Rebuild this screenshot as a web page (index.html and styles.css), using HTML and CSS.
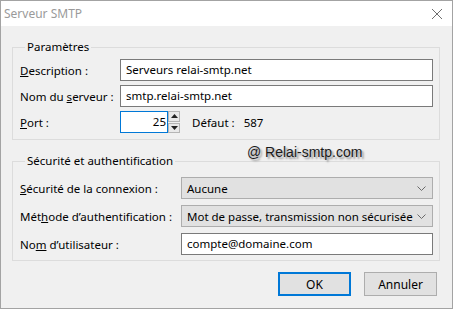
FILE: index.html
```html
<!doctype html>
<html>
<head>
    <meta charset="utf-8">
    <title>Serveur SMTP</title>
    <link rel="stylesheet" href="styles.css">
</head>
<body>

<div class="window">
    <div class="titlebar">
        <span class="title">Serveur SMTP</span>
        <svg class="close" width="12" height="12" viewBox="0 0 12 12">
            <path d="M1 1 L11 11 M11 1 L1 11" stroke="#6e6e6e" stroke-width="1" fill="none"/>
        </svg>
    </div>

    <div class="content">
        <fieldset class="group group-params">
            <legend>Paramètres</legend>
            <div class="form-grid">
                <label><u>D</u>escription :</label>
                <div class="textbox">Serveurs relai-smtp.net</div>

                <label>Nom du <u>s</u>erveur :</label>
                <div class="textbox">smtp.relai-smtp.net</div>

                <label><u>P</u>ort :</label>
                <div class="port-row">
                    <div class="textbox port focused">25</div>
                    <div class="spinner">
                        <span class="spin-btn">
                            <svg width="7" height="4" viewBox="0 0 7 4"><path d="M0 4 L3.5 0 L7 4 Z" fill="#222"/></svg>
                        </span>
                        <span class="spin-btn">
                            <svg width="7" height="4" viewBox="0 0 7 4"><path d="M0 0 L3.5 4 L7 0 Z" fill="#222"/></svg>
                        </span>
                    </div>
                    <span class="default-label">Défaut :</span>
                    <span class="default-value">587</span>
                </div>
            </div>
        </fieldset>

        <fieldset class="group group-security">
            <legend>Sécurité et authentification</legend>
            <div class="form-grid wide">
                <label><u>S</u>écurité de la connexion :</label>
                <div class="combo">
                    <span>Aucune</span>
                    <svg width="9" height="5" viewBox="0 0 9 5"><path d="M0.5 0.5 L4.5 4.5 L8.5 0.5" stroke="#6a6a6a" fill="none"/></svg>
                </div>

                <label>Mét<u>h</u>ode d’authentification :</label>
                <div class="combo">
                    <span>Mot de passe, transmission non sécurisée</span>
                    <svg width="9" height="5" viewBox="0 0 9 5"><path d="M0.5 0.5 L4.5 4.5 L8.5 0.5" stroke="#6a6a6a" fill="none"/></svg>
                </div>

                <label>No<u>m</u> d’utilisateur :</label>
                <div class="textbox">compte@domaine.com</div>
            </div>
        </fieldset>

        <div class="buttons">
            <button class="btn default">OK</button>
            <button class="btn">Annuler</button>
        </div>
    </div>

    <div class="watermark">@ Relai-smtp.com</div>
</div>

</body>
</html>
```

FILE: styles.css
```css
body {
    margin: 0;
    font-family: "Noto Sans", "Open Sans", sans-serif;
    font-size: 11.5px;
    color: #000;
    background: #fff;
}

.window {
    position: relative;
    width: 453px;
    height: 309px;
    box-sizing: border-box;
    border: 1px solid #a3a3a3;
    background: #f0f0f0;
}

.titlebar {
    height: 25px;
    background: #fff;
    display: flex;
    align-items: center;
    justify-content: space-between;
    padding: 0 9px 0 3px;
}
.title {
    color: #9a9a9a;
    font-size: 12px;
}
.close {
    display: block;
}

.content {
    padding: 13px 12px 0 11px;
}

.group {
    margin: 0;
    border: 1px solid #dcdcdc;
    padding: 4px 6px 6px 7px;
}
.group legend {
    padding: 0 2px;
    margin-left: 5px;
    line-height: 16px;
}
.group-security {
    margin-top: 13px;
    padding-top: 8px;
    padding-bottom: 5px;
}

.form-grid {
    display: grid;
    grid-template-columns: 100px 1fr;
    grid-auto-rows: 22px;
    row-gap: 4px;
    align-items: center;
    white-space: nowrap;
}
.form-grid.wide {
    grid-template-columns: 161px 1fr;
    row-gap: 6px;
}

.textbox {
    height: 22px;
    box-sizing: border-box;
    border: 1px solid #7a7a7a;
    background: #fff;
    padding: 0 5px;
    line-height: 20px;
    overflow: hidden;
}
.textbox.focused {
    border-color: #0078d7;
}

.port-row {
    display: flex;
    align-items: center;
    height: 22px;
}
.textbox.port {
    width: 48px;
    text-align: right;
    padding-right: 1px;
}
.spinner {
    width: 12px;
    height: 22px;
    display: flex;
    flex-direction: column;
    gap: 1px;
}
.spin-btn {
    flex: 1;
    display: flex;
    align-items: center;
    justify-content: center;
    background: #e9e9e9;
    border: 1px solid #b5b5b5;
}
.default-label {
    margin-left: 12px;
}
.default-value {
    margin-left: 9px;
}

.combo {
    height: 22px;
    box-sizing: border-box;
    border: 1px solid #adadad;
    background: #e1e1e1;
    display: flex;
    align-items: center;
    justify-content: space-between;
    padding: 0 6px 0 5px;
    overflow: hidden;
}

.buttons {
    display: flex;
    justify-content: flex-end;
    gap: 13px;
    margin-top: 11px;
    padding-right: 3px;
}
.btn {
    width: 73px;
    height: 24px;
    font: inherit;
    font-size: 12px;
    background: #e1e1e1;
    border: 1px solid #adadad;
    padding: 0;
}
.btn.default {
    border: 2px solid #0078d7;
}

.watermark {
    position: absolute;
    left: 246px;
    top: 143px;
    font-family: "Liberation Sans", Arial, sans-serif;
    font-size: 14px;
    color: #1a1a1a;
    text-shadow: 2px 2px 2px #8a8a8a;
}
```
